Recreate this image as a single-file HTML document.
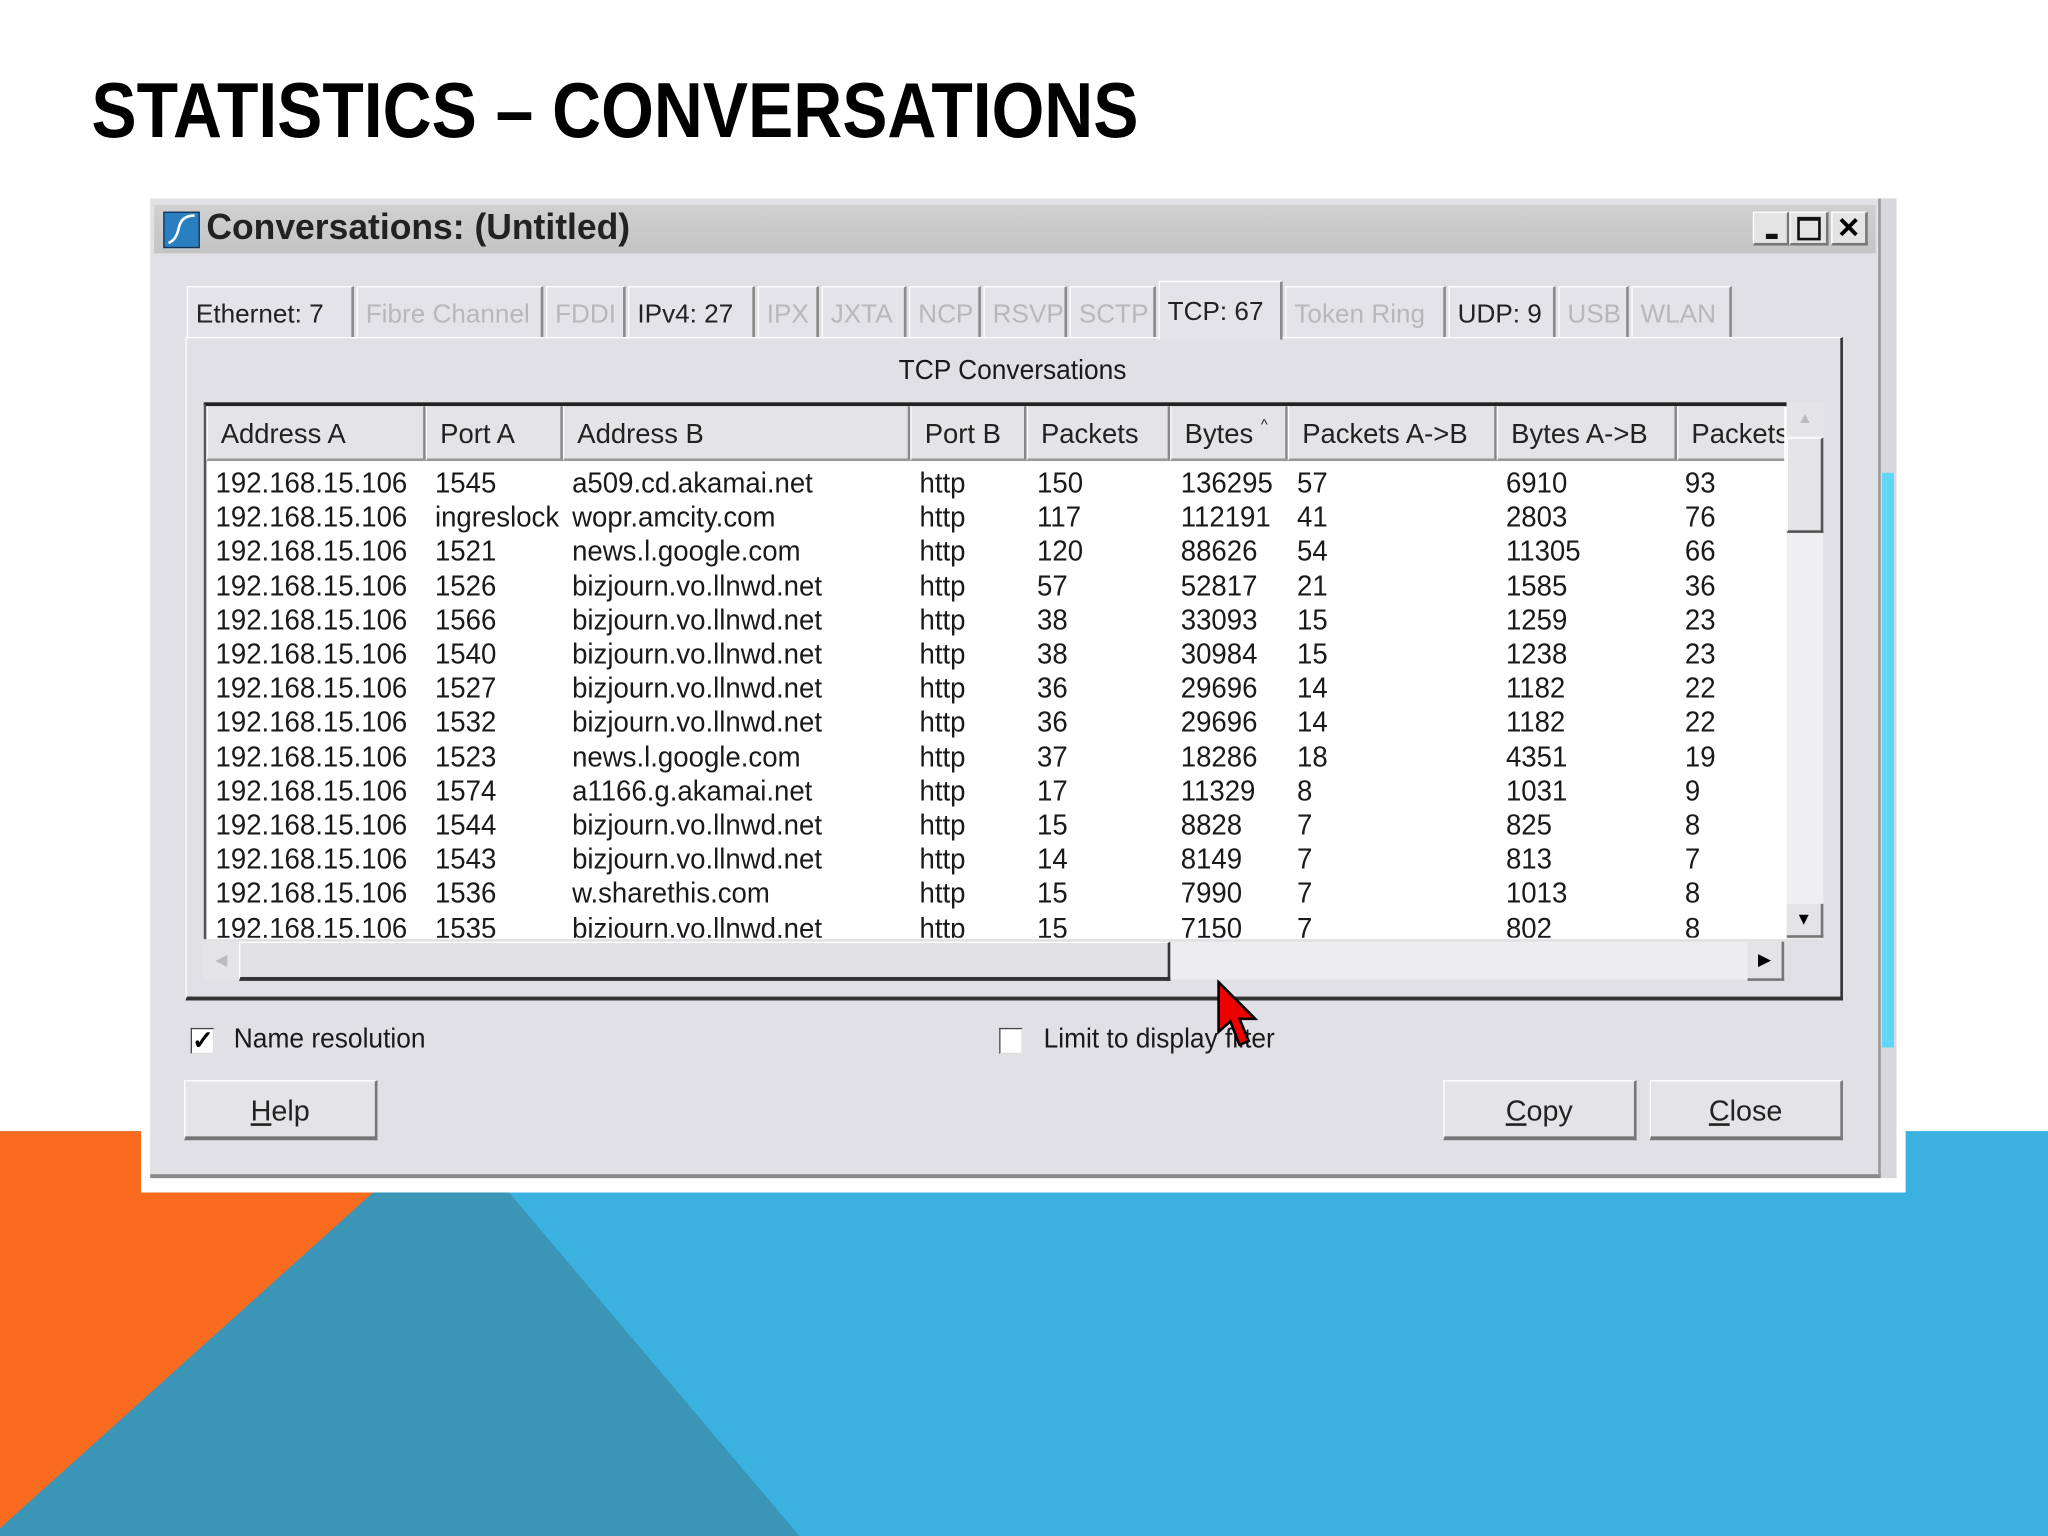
<!DOCTYPE html>
<html><head><meta charset="utf-8"><style>
html,body{margin:0;padding:0;width:2048px;height:1536px;overflow:hidden;background:#fff}
#s{position:absolute;left:0;top:0;width:1568px;height:1176px;transform:scale(1.306122);transform-origin:0 0;font-family:"Liberation Sans",sans-serif}
.a{position:absolute;white-space:nowrap}
.t{font-size:22px;color:#1a1a1a;transform:scaleX(0.96);transform-origin:0 0}
.tab{position:absolute;top:219px;height:39px;background:#e4e4e8;border:1px solid #fff;border-right:2px solid #8a8a8a;border-bottom:none;font-size:20px;line-height:42px;padding-left:6px;box-sizing:border-box;color:#222;overflow:hidden}
.g{color:#b8b8b8}
.hd{position:absolute;top:311px;height:42px;background:#e4e4e6;border-left:1px solid #fff;border-right:2px solid #888;border-bottom:2px solid #999;box-sizing:border-box;font-size:21px;line-height:44px;padding-left:10px;color:#222}
.btn{position:absolute;top:827px;height:46px;width:148px;background:#e4e4e7;border:1px solid #fff;border-right:2px solid #777;border-bottom:3px solid #777;box-sizing:border-box;text-align:center;font-size:22px;line-height:46px;color:#222}
.cb{position:absolute;width:16px;height:18px;border:1px solid #444;border-right-color:#ddd;border-bottom-color:#ddd;background:#fff}
</style></head><body><div id="s">
<svg class="a" style="left:0;top:0" width="1568" height="1176">
<rect x="0" y="866" width="1568" height="310" fill="#3bb1e0"/>
<polygon points="0,866 300,866 330,913 0,1176" fill="#f96b1f"/>
<polygon points="350,866 612,1176 0,1176 0,1170 300,900" fill="#3a95b7"/>
</svg>
<div class="a" style="left:70px;top:50px;font-size:60px;font-weight:bold;color:#000;transform:scaleX(0.865);transform-origin:0 0">STATISTICS – CONVERSATIONS</div>
<div class="a" style="left:108px;top:148px;width:1351px;height:765px;background:#fff"></div>
<div class="a" style="left:1440px;top:152px;width:12px;height:750px;background:#d8d8dc"></div>
<div class="a" style="left:1441px;top:362px;width:9px;height:440px;background:#5fd6f7"></div>
<div class="a" style="left:115px;top:152px;width:1325px;height:750px;background:#e1e1e5;border-right:2px solid #999;border-bottom:3px solid #888;box-sizing:border-box"></div>
<div class="a" style="left:118px;top:157px;width:1318px;height:37px;background:linear-gradient(#d0d0d0,#c4c4c4)"></div>
<div class="a" style="left:125px;top:162px;width:26px;height:26px;background:#2a7fc0;border:1px solid #135"></div>
<svg class="a" style="left:125px;top:162px" width="28" height="28"><path d="M4 24 Q10 22 12 12 Q14 3 24 3" stroke="#fff" stroke-width="2" fill="none"/></svg>
<div class="a" style="left:158px;top:158px;font-size:28px;font-weight:bold;color:#222;transform:scaleX(0.97);transform-origin:0 0">Conversations: (Untitled)</div>
<div class="a" style="left:1342px;top:162px;width:28px;height:26px;background:#e4e4e4;border:1px solid #fff;border-right:2px solid #777;border-bottom:2px solid #777;box-sizing:border-box"><div class="a" style="left:9px;top:16px;width:9px;height:4px;background:#111"></div></div>
<div class="a" style="left:1370px;top:162px;width:30px;height:26px;background:#e4e4e4;border:1px solid #fff;border-right:2px solid #777;border-bottom:2px solid #777;box-sizing:border-box"><div class="a" style="left:5px;top:3px;width:14px;height:13px;border:2px solid #111;border-top-width:3px"></div></div>
<div class="a" style="left:1402px;top:162px;width:28px;height:26px;background:#e4e4e4;border:1px solid #fff;border-right:2px solid #777;border-bottom:2px solid #777;box-sizing:border-box;font-size:22px;font-weight:bold;line-height:23px;text-align:center">✕</div>
<div class="a" style="left:142px;top:258px;width:1269px;height:508px;border:1px solid #fff;border-right:2px solid #333;border-bottom:3px solid #333;box-sizing:border-box"></div>
<div class="tab" style="left:143px;width:128px">Ethernet: 7</div>
<div class="tab g" style="left:273px;width:143px">Fibre Channel</div>
<div class="tab g" style="left:418px;width:61px">FDDI</div>
<div class="tab" style="left:481px;width:97px">IPv4: 27</div>
<div class="tab g" style="left:580px;width:47px">IPX</div>
<div class="tab g" style="left:629px;width:65px">JXTA</div>
<div class="tab g" style="left:696px;width:55px">NCP</div>
<div class="tab g" style="left:753px;width:64px">RSVP</div>
<div class="tab g" style="left:819px;width:66px">SCTP</div>
<div class="tab" style="left:887px;width:95px;top:215px;height:45px;line-height:46px;border-bottom:none;background:#e4e4e8">TCP: 67</div>
<div class="tab g" style="left:984px;width:123px">Token Ring</div>
<div class="tab" style="left:1109px;width:82px">UDP: 9</div>
<div class="tab g" style="left:1193px;width:54px">USB</div>
<div class="tab g" style="left:1249px;width:77px">WLAN</div>
<div class="a t" style="left:688px;top:272px;font-size:21px">TCP Conversations</div>
<div class="a" style="left:156px;top:308px;width:1212px;height:411px;background:#fff;border-top:3px solid #222;border-left:2px solid #555;box-sizing:border-box"></div>
<div class="hd" style="left:158px;width:168px">Address A</div>
<div class="hd" style="left:326px;width:105px">Port A</div>
<div class="hd" style="left:431px;width:266px">Address B</div>
<div class="hd" style="left:697px;width:89px">Port B</div>
<div class="hd" style="left:786px;width:110px">Packets</div>
<div class="hd" style="left:896px;width:90px">Bytes <span style="font-size:11px;vertical-align:top;line-height:30px">^</span></div>
<div class="hd" style="left:986px;width:160px">Packets A-&gt;B</div>
<div class="hd" style="left:1146px;width:138px">Bytes A-&gt;B</div>
<div class="hd" style="left:1284px;width:82px;border-right:none;overflow:hidden">Packets</div>
<div class="a" style="left:158px;top:356px;width:1208px;height:362px;overflow:hidden">
<div id="rows" style="position:absolute;left:0;top:0"></div>
</div>
<div class="a" style="left:1368px;top:308px;width:28px;height:411px;background:#efeff2"></div>
<div class="a" style="left:1368px;top:308px;width:28px;height:26px;background:#e4e4e6;color:#bbb;font-size:12px;text-align:center;line-height:24px">▲</div>
<div class="a" style="left:1368px;top:335px;width:28px;height:73px;background:#e4e4e6;border:1px solid #fff;border-right:2px solid #555;border-bottom:2px solid #555;box-sizing:border-box"></div>
<div class="a" style="left:1368px;top:692px;width:28px;height:26px;background:#e4e4e6;border-right:2px solid #777;border-bottom:2px solid #777;box-sizing:border-box;font-size:13px;text-align:center;line-height:24px">▼</div>
<div class="a" style="left:156px;top:721px;width:1210px;height:29px;background:#ededf0"></div>
<div class="a" style="left:156px;top:721px;width:27px;height:29px;background:#e4e4e6;color:#bbb;font-size:12px;text-align:center;line-height:29px">◀</div>
<div class="a" style="left:183px;top:721px;width:713px;height:30px;background:#e2e2e5;border:1px solid #fff;border-right:2px solid #333;border-bottom:3px solid #333;box-sizing:border-box"></div>
<div class="a" style="left:1338px;top:721px;width:28px;height:30px;background:#e4e4e6;border-right:2px solid #777;border-bottom:2px solid #777;box-sizing:border-box;font-size:13px;text-align:center;line-height:28px">▶</div>
<div class="cb" style="left:146px;top:787px"></div>
<div class="a" style="left:147px;top:784px;font-size:20px;font-weight:bold">✓</div>
<div class="a t" style="left:179px;top:784px;font-size:21px">Name resolution</div>
<div class="cb" style="left:765px;top:787px"></div>
<div class="a t" style="left:799px;top:784px;font-size:21px">Limit to display filter</div>
<div class="btn" style="left:141px"><u>H</u>elp</div>
<div class="btn" style="left:1105px"><u>C</u>opy</div>
<div class="btn" style="left:1263px"><u>C</u>lose</div>
<svg class="a" style="left:928px;top:750px" width="40" height="60"><path d="M5 2 L5 40 L14 32 L21 50 L28 47 L21 30 L33 30 Z" fill="#e00" stroke="#000" stroke-width="2"/></svg>
</div>
<script>
var d=[["1545","a509.cd.akamai.net","150","136295","57","6910","93"],["ingreslock","wopr.amcity.com","117","112191","41","2803","76"],["1521","news.l.google.com","120","88626","54","11305","66"],["1526","bizjourn.vo.llnwd.net","57","52817","21","1585","36"],["1566","bizjourn.vo.llnwd.net","38","33093","15","1259","23"],["1540","bizjourn.vo.llnwd.net","38","30984","15","1238","23"],["1527","bizjourn.vo.llnwd.net","36","29696","14","1182","22"],["1532","bizjourn.vo.llnwd.net","36","29696","14","1182","22"],["1523","news.l.google.com","37","18286","18","4351","19"],["1574","a1166.g.akamai.net","17","11329","8","1031","9"],["1544","bizjourn.vo.llnwd.net","15","8828","7","825","8"],["1543","bizjourn.vo.llnwd.net","14","8149","7","813","7"],["1536","w.sharethis.com","15","7990","7","1013","8"],["1535","bizjourn.vo.llnwd.net","15","7150","7","802","8"]];
var h="";
d.forEach(function(r,i){var c=["192.168.15.106",r[0],r[1],"http",r[2],r[3],r[4],r[5],r[6]];var y=i*26.2+1;
var X=[7,175,280,546,636,746,835,995,1132];c.forEach(function(v,j){h+='<div class="a t" style="left:'+X[j]+'px;top:'+y+'px">'+v+'</div>';});});
document.getElementById("rows").innerHTML=h;
</script>
</body></html>
